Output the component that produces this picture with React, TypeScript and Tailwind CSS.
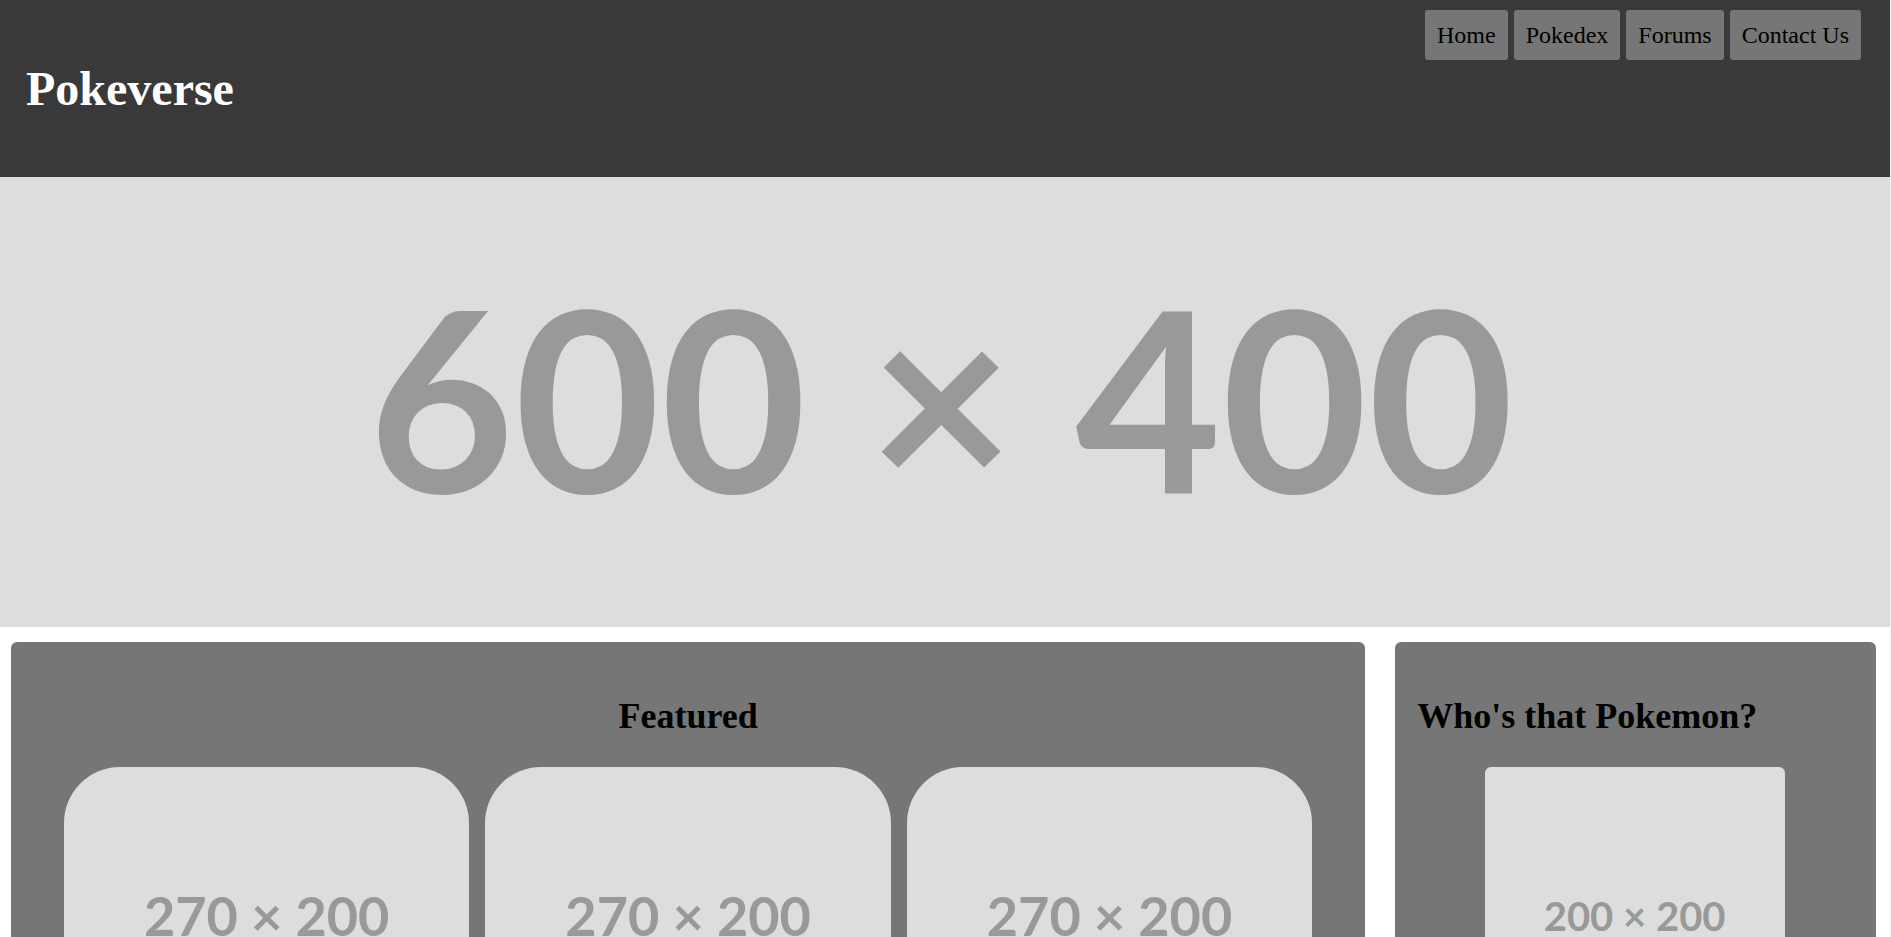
const navLinks = ["Home", "Pokedex", "Forums", "Contact Us"];
const featured = ["270 × 200", "270 × 200", "270 × 200"];

function Placeholder({ label, className }: { label: string; className: string }) {
  return (
    <div
      className={`flex items-center justify-center overflow-hidden bg-[#dddddd] font-[Lato,sans-serif] leading-none font-bold whitespace-nowrap text-[#999999] ${className}`}
    >
      {label}
    </div>
  );
}

export default function App() {
  return (
    <div className="min-h-screen border-r border-[#f4f4f4] bg-white pb-4 font-['Liberation_Serif','Times_New_Roman',serif] text-black">
      <header className="flex items-start justify-between bg-[#393939] pr-[29px] pl-[26px]">
        <h1 className="py-[60px] text-5xl leading-[57px] font-bold text-white">Pokeverse</h1>
        <nav className="flex gap-1.5 pt-2.5">
          {navLinks.map((link) => (
            <a
              key={link}
              href="#"
              className="rounded-[3px] bg-[#767676] px-3 text-2xl leading-[50px] whitespace-nowrap"
            >
              {link}
            </a>
          ))}
        </nav>
      </header>

      <Placeholder label="600 × 400" className="h-[450px] pr-2 pb-3 text-[252px]" />

      <main className="mt-[15px] grid grid-cols-[73.8fr_26.2fr] gap-[30px] pr-3.5 pl-[11px]">
        <section className="rounded-md bg-[#767676] px-[53px] pb-12">
          <h2 className="pt-[54px] pb-[30px] text-center text-4xl leading-[41px] font-bold">Featured</h2>
          <div className="flex gap-4">
            {featured.map((label, i) => (
              <Placeholder key={i} label={label} className="h-[300px] flex-1 rounded-[56px] pb-0.5 text-[54px]" />
            ))}
          </div>
        </section>

        <aside className="rounded-md bg-[#767676] pr-6 pl-[22px] pb-12">
          <h2 className="pt-[54px] pb-[30px] text-4xl leading-[41px] font-bold whitespace-nowrap">
            Who's that Pokemon?
          </h2>
          <Placeholder label="200 × 200" className="mx-auto h-[300px] w-[300px] rounded-md pb-0.5 text-[40px]" />
        </aside>
      </main>
    </div>
  );
}
